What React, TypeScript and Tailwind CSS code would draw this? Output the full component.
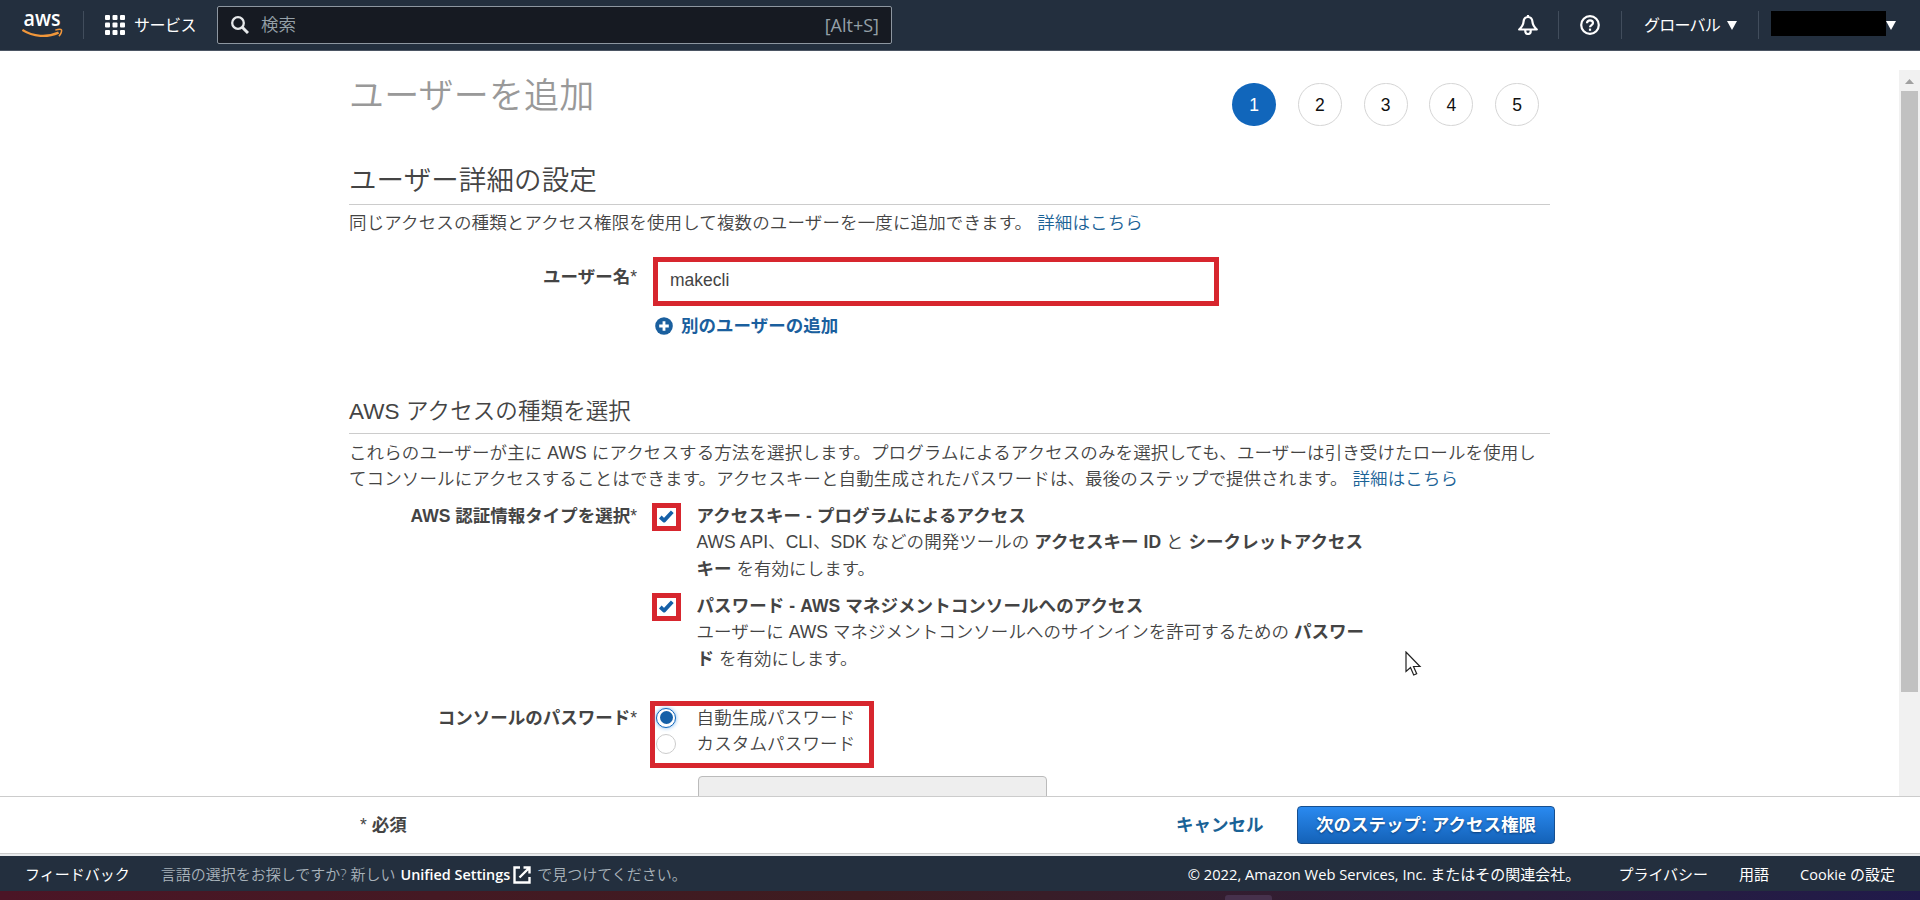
import type { ReactNode } from 'react'

const STEPS = [1, 2, 3, 4, 5]

const Divider = () => <div className="h-7 w-px shrink-0 bg-[#414d5c]" />

const Caret = () => (
  <svg width="10" height="9" viewBox="0 0 10 9" fill="#fff" className="shrink-0">
    <path d="M0 0h10L5 9z" />
  </svg>
)

const AwsLogo = () => (
  <svg width="42" height="44" viewBox="0 -9 42 44" className="shrink-0">
    <text x="1.5" y="13.5" fill="#fff" fontFamily="'Open Sans', sans-serif" fontWeight="600" fontSize="22" textLength="37" lengthAdjust="spacingAndGlyphs">aws</text>
    <path d="M.4 18C11 25 25.500 25.600 36.600 20.600" fill="none" stroke="#f0963a" strokeWidth="2.300" />
    <path d="M33.300 18.100c2.500-.8 5.700-1 6.200-.2.500.9-.4 4.300-2.600 6.200" fill="none" stroke="#f0963a" strokeWidth="1.500" />
  </svg>
)

const ServicesIcon = () => (
  <svg width="20" height="20" viewBox="0 0 20 20" fill="#fff" className="shrink-0">
    {[0, 7.5, 15].map((y) => [0, 7.5, 15].map((x) => <rect key={`${x}-${y}`} x={x} y={y} width="5" height="5" rx="1" />))}
  </svg>
)

const SearchIcon = () => (
  <svg width="18" height="18" viewBox="0 0 18 18" fill="none" stroke="#e6e8ea" className="shrink-0">
    <circle cx="7" cy="7" r="5.800" strokeWidth="2.300" />
    <path d="M11 11l6 6" strokeWidth="3" />
  </svg>
)

const BellIcon = () => (
  <svg width="20" height="20" viewBox="0 0 20 20" fill="none" stroke="#fff" strokeWidth="2.200" strokeLinejoin="round" className="shrink-0">
    <path d="M10 0v2M10 2C7.200 2 5.700 4.200 5.500 7c-.2 3.500-1.700 5-4.300 7.500h17.600C16.200 12 14.700 10.500 14.500 7 14.300 4.200 12.800 2 10 2z" />
    <path d="M7.300 15v1.300a2.700 2.700 0 0 0 5.400 0V15" />
  </svg>
)

const HelpIcon = () => (
  <svg width="20" height="20" viewBox="0 0 20 20" fill="none" stroke="#fff" strokeWidth="2.200" className="shrink-0">
    <circle cx="10" cy="10" r="8.800" />
    <path d="M7 8.200C7 6.300 8.300 5.300 10 5.300s3 1 3 2.700c0 2-3 2.200-3 4.300" />
    <path d="M10 13.600v2.200" />
  </svg>
)

const PlusIcon = () => (
  <svg width="18" height="18" viewBox="0 0 18 18" className="shrink-0">
    <circle cx="9" cy="9" r="8.800" fill="#1a5f9e" />
    <path d="M9 4.200v9.600M4.200 9h9.600" stroke="#fff" strokeWidth="2.800" />
  </svg>
)

const ExternalIcon = () => (
  <svg width="18" height="18" viewBox="0 0 18 18" fill="none" stroke="#fff" strokeWidth="2.400" className="shrink-0">
    <path d="M7 1.500H1.500v15h15V11M10.500 1.500h6V7.500M16 2L6.500 11.500" />
  </svg>
)

const Cursor = () => (
  <svg width="17" height="26" viewBox="0 0 17 26" className="absolute left-[1405px] top-[651px]">
    <path d="M1 1v19.500l4.500-4 3.200 7.500 3-1.300-3.200-7.200H15z" fill="#fff" stroke="#222" strokeWidth="1.200" />
  </svg>
)

const CheckMark = () => (
  <svg width="16" height="14" viewBox="0 0 16 14" fill="none" stroke="#1560a8" strokeWidth="3.800" className="-translate-x-[0.5px]">
    <path d="M1.800 7l3.800 3.600L13.800 1.800" strokeLinejoin="round" />
  </svg>
)

function CheckOption({ title, children }: { title: string; children: ReactNode }) {
  return (
    <div className="flex">
      <div className="flex h-7 w-[29px] shrink-0 items-center justify-center border-[5px] border-[#d7262e]">
        <CheckMark />
      </div>
      <div className="ml-[15.5px] whitespace-nowrap">
        <div className="font-bold tracking-[0.08px]">{title}</div>
        <div className="tracking-[0.04px]">{children}</div>
      </div>
    </div>
  )
}

function Label({ children }: { children: ReactNode }) {
  return (
    <div className="w-[288px] shrink-0 whitespace-nowrap text-right">
      <span className="font-bold">{children}</span>*
    </div>
  )
}

function TopBar() {
  return (
    <header className="flex h-[51px] shrink-0 items-center border-b border-[#4b5563] bg-[#232f3e] text-[16px] text-white">
      <div className="ml-[22px] w-[61px]"><AwsLogo /></div>
      <Divider />
      <div className="ml-[21px] flex w-[112px] items-center gap-[9px]">
        <ServicesIcon />
        <span className="translate-y-px whitespace-nowrap tracking-[-0.5px]">サービス</span>
      </div>
      <div className="flex h-[38px] w-[675px] items-center rounded-[2px] border border-[#8d96a0] bg-[#161a22] pl-[13px] pr-[12px] text-[17.5px] text-[#95a0a8]">
        <SearchIcon />
        <span className="ml-3 font-[350]">検索</span>
        <span className="ml-auto font-['Open_Sans'] text-[18px]">[Alt+S]</span>
      </div>
      <div className="ml-auto flex items-center">
        <BellIcon />
        <div className="ml-5"><Divider /></div>
        <div className="mx-[21px]"><HelpIcon /></div>
        <Divider />
        <div className="ml-[22px] mr-[21px] flex items-center gap-[7px]">
          <span className="w-[76px] translate-y-px whitespace-nowrap tracking-[-0.8px]">グローバル</span>
          <Caret />
        </div>
        <Divider />
        <div className="ml-3 h-[25px] w-[115px] -translate-y-[2px] bg-black" />
        <div className="mr-[24px]"><Caret /></div>
      </div>
    </header>
  )
}

function Scrollbar() {
  return (
    <div className="mt-[19px] flex w-[21px] shrink-0 flex-col items-center bg-[#f1f1f1]">
      <svg width="9" height="5" viewBox="0 0 9 5" fill="#a0a0a0" className="mt-[9px] shrink-0"><path d="M0 5L4.500 0 9 5z" /></svg>
      <div className="mt-[7px] h-[601px] w-[17px] bg-[#c1c1c1]" />
    </div>
  )
}

function UserForm() {
  return (
    <main className="ml-[349px] w-[1201px] shrink-0 pt-6 text-[17.5px] font-[350] leading-[26.25px] text-[#444]">
      <div className="flex h-[81px] items-start justify-between">
        <h1 className="mt-px text-[35px] leading-10 tracking-[0.15px] text-[#999]">ユーザーを追加</h1>
        <ol className="mr-[11px] mt-2 flex gap-[21.75px]">
          {STEPS.map((n) => (
            <li
              key={n}
              className={`flex h-[43px] w-11 items-center justify-center rounded-full pt-px text-[17.5px] ${n === 1 ? 'bg-[#1166bb] text-white' : 'border border-[#d5d5d5] text-[#111]'}`}
            >
              {n}
            </li>
          ))}
        </ol>
      </div>

      <h2 className="h-[49px] border-b border-[#ccc] text-[27.5px] leading-[50px] tracking-[0.1px]">ユーザー詳細の設定</h2>
      <p className="mt-[5px] whitespace-nowrap tracking-[0.13px]">
        同じアクセスの種類とアクセス権限を使用して複数のユーザーを一度に追加できます。 <a className="text-[#1a6296]">詳細はこちら</a>
      </p>

      <div className="mt-[20.75px] flex">
        <div className="mt-[7px]"><Label>ユーザー名</Label></div>
        <div className="ml-4">
          <div className="flex h-[49px] w-[566px] items-center border-[5px] border-[#d7262e] pb-[2px] pl-3">makecli</div>
          <div className="mt-[7px] flex items-center gap-2 pl-[2px] font-bold text-[#1a5f9e]">
            <PlusIcon />
            別のユーザーの追加
          </div>
        </div>
      </div>

      <h3 className="mt-[50.75px] h-11 border-b border-[#ccc] text-[22.5px] leading-[43px] tracking-[0.1px]">AWS アクセスの種類を選択</h3>
      <p className="mt-[6px] whitespace-nowrap tracking-[0.11px]">
        これらのユーザーが主に AWS にアクセスする方法を選択します。プログラムによるアクセスのみを選択しても、ユーザーは引き受けたロールを使用し<br />
        てコンソールにアクセスすることはできます。アクセスキーと自動生成されたパスワードは、最後のステップで提供されます。 <a className="text-[#1a6296]">詳細はこちら</a>
      </p>

      <div className="mt-[10.5px] flex">
        <Label>AWS 認証情報タイプを選択</Label>
        <div className="ml-[15px] flex flex-col gap-[11.25px]">
          <CheckOption title="アクセスキー - プログラムによるアクセス">
            AWS API、CLI、SDK などの開発ツールの <b className="font-bold">アクセスキー ID</b> と <b className="font-bold">シークレットアクセス<br />キー</b> を有効にします。
          </CheckOption>
          <CheckOption title="パスワード - AWS マネジメントコンソールへのアクセス">
            ユーザーに AWS マネジメントコンソールへのサインインを許可するための <b className="font-bold">パスワー<br />ド</b> を有効にします。
          </CheckOption>
        </div>
      </div>

      <div className="mt-[29px] flex">
        <div className="mt-1"><Label>コンソールのパスワード</Label></div>
        <div className="ml-[13px]">
          <div className="h-[67px] w-[224px] border-[5px] border-[#d7262e] pl-px tracking-[0.15px]">
            <div className="-mt-px flex items-center gap-[20.5px]">
              <span className="flex size-5 items-center justify-center rounded-full border border-[#1166bb] bg-white shadow-[0_0_4px_#7ab8f0]">
                <span className="size-[13px] rounded-full bg-[#1560a8]" />
              </span>
              自動生成パスワード
            </div>
            <div className="flex items-center gap-[20.5px]">
              <span className="size-5 rounded-full border border-[#ccc] bg-white" />
              カスタムパスワード
            </div>
          </div>
          <div className="ml-12 mt-2 h-10 w-[349px] rounded-[4px] border border-[#bbb] bg-[#eee]" />
        </div>
      </div>
    </main>
  )
}

function ActionBar() {
  return (
    <div className="flex h-[58px] shrink-0 items-center border-y border-[#ccc] bg-white text-[17.5px] text-[#444]">
      <div className="ml-[360px]">* <b>必須</b></div>
      <a className="ml-auto font-bold text-[#1a6296]">キャンセル</a>
      <button className="ml-[33.5px] mr-[365px] h-[38px] w-[258px] whitespace-nowrap rounded-[4px] border border-[#174f8f] bg-linear-to-b from-[#2a8af0] to-[#1462b8] font-bold text-white [text-shadow:0_1px_2px_#0b3d78]">
        次のステップ: アクセス権限
      </button>
    </div>
  )
}

function Footer() {
  return (
    <footer className="flex h-[35px] shrink-0 items-center whitespace-nowrap bg-[#232f3e] pl-[25px] pr-[25px] pt-[2px] font-['Open_Sans','Noto_Sans_CJK_JP',sans-serif] text-[15px] text-white">
      <span>フィードバック</span>
      <span className="ml-[31px] flex items-center font-[350] text-[#a9b3bb]">
        言語の選択をお探しですか? 新しい
        <span className="ml-[5px] mr-[3px] text-[14.400px] font-semibold text-white">Unified Settings</span>
        <ExternalIcon />
        <span className="ml-[6px]">で見つけてください。</span>
      </span>
      <span className="ml-auto"><span className="text-[14.700px] font-medium">© 2022, Amazon Web Services, Inc.</span> またはその関連会社。</span>
      <span className="ml-[38px]">プライバシー</span>
      <span className="ml-[31px]">用語</span>
      <span className="ml-[31px]"><span className="text-[14.500px] font-medium">Cookie</span> の設定</span>
    </footer>
  )
}

// sliver of the desktop taskbar under the browser window
function Taskbar() {
  return (
    <div className="flex h-[9px] shrink-0 items-end bg-linear-to-r from-[#4b1526] via-[#3d1c20] via-45% to-[#201a4a]">
      <div className="ml-[1225px] h-[5px] w-[47px] rounded-t-[3px] bg-[#46314c]" />
    </div>
  )
}

export default function App() {
  return (
    <div className="relative flex h-[900px] w-[1920px] flex-col overflow-hidden bg-white font-['Liberation_Sans','Noto_Sans_CJK_JP',sans-serif]">
      <TopBar />
      <div className="flex h-[745px] shrink-0 justify-between overflow-hidden">
        <UserForm />
        <Scrollbar />
      </div>
      <ActionBar />
      <div className="h-[2px] shrink-0 bg-[#e8eaec]" />
      <Footer />
      <Taskbar />
      <Cursor />
    </div>
  )
}
